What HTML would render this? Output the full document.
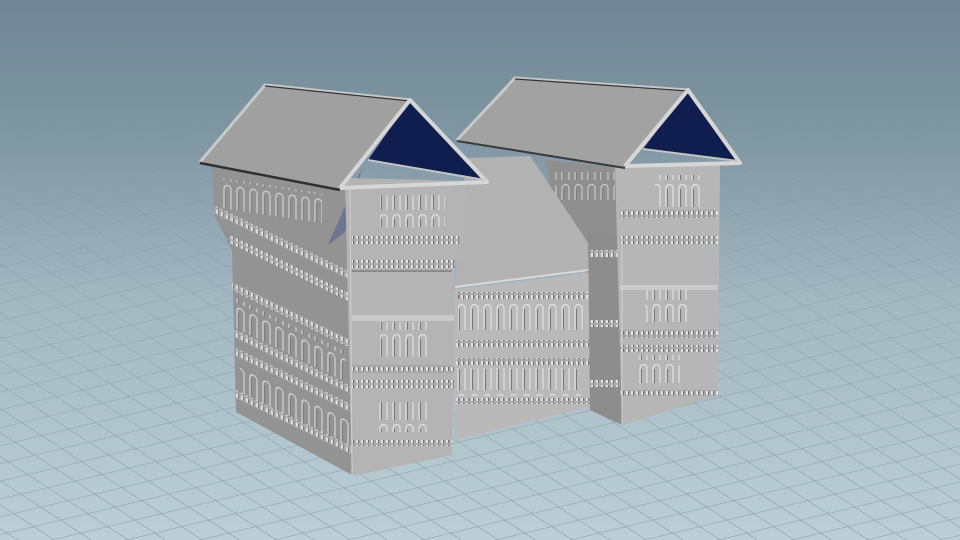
<!DOCTYPE html>
<html><head><meta charset="utf-8"><style>
html,body{margin:0;padding:0;width:960px;height:540px;overflow:hidden;background:#738997}
svg{display:block}
</style></head><body>
<svg width="960" height="540" viewBox="0 0 960 540" xmlns="http://www.w3.org/2000/svg">
<defs>
<linearGradient id="bg" x1="0" y1="0" x2="0" y2="1">
<stop offset="0" stop-color="#708694"/>
<stop offset="0.25" stop-color="#7f96a3"/>
<stop offset="0.55" stop-color="#a3b7c1"/>
<stop offset="1" stop-color="#bccfd6"/>
</linearGradient>
<linearGradient id="fade" x1="0" y1="0" x2="0" y2="1">
<stop offset="0" stop-color="#fff" stop-opacity="0"/>
<stop offset="0.2" stop-color="#fff" stop-opacity="0"/>
<stop offset="0.4" stop-color="#fff" stop-opacity="0.5"/>
<stop offset="1" stop-color="#fff" stop-opacity="1"/>
</linearGradient>
<mask id="gm"><rect width="960" height="540" fill="url(#fade)"/></mask>
<pattern id="grid" width="100" height="100" patternUnits="userSpaceOnUse" patternTransform="matrix(0.27,-0.065,0.2,0.13,0,0)">
<path d="M0 0H100M0 0V100" stroke="#7d929d" stroke-width="6" fill="none"/>
</pattern>
<pattern id="win" width="13" height="30" patternUnits="userSpaceOnUse">
<path d="M3 30V8a3.5 3.5 0 0 1 7 0V30" fill="none" stroke="#e0e0e0" stroke-width="1.2"/>
<path d="M4.5 30V9" stroke="#777" stroke-width="1"/>
</pattern>
<pattern id="dent" width="5" height="6" patternUnits="userSpaceOnUse">
<rect width="5" height="6" fill="#a8a8a8"/><rect x="1" y="1" width="2" height="4" fill="#e2e2e2"/><rect x="3" y="1" width="1" height="4" fill="#6f6f6f"/>
</pattern>
</defs>
<rect width="960" height="540" fill="url(#bg)"/>
<rect width="960" height="540" fill="url(#grid)" mask="url(#gm)" opacity="0.8"/>

<polygon points="545,160 625,168 625,265 590,278 560,235" fill="#8f8f8f"/>
<rect x="555" y="172" width="60" height="28" fill="url(#win)" opacity="0.7"/>

<polygon points="212,165 350,186 352,475 236,412 232,250 214,215" fill="#939393"/>
<rect x="222" y="178" width="100" height="30" fill="url(#win)" opacity="0.8" transform="skewY(8.5) translate(0,-33)"/>
<g transform="skewY(26) translate(0,-113)">
<rect x="214" y="214" width="136" height="8" fill="url(#dent)"/>
<rect x="228" y="236" width="122" height="8" fill="url(#dent)"/>
<rect x="232" y="282" width="118" height="8" fill="url(#dent)"/>
<rect x="236" y="296" width="110" height="30" fill="url(#win)" opacity="0.85"/>
<rect x="234" y="328" width="116" height="8" fill="url(#dent)"/>
<rect x="236" y="346" width="116" height="8" fill="url(#dent)"/>
<rect x="240" y="360" width="110" height="28" fill="url(#win)" opacity="0.85"/>
<rect x="236" y="388" width="116" height="8" fill="url(#dent)"/>
</g>
<polygon points="328,245 362,168 345,232" fill="#6e7590"/>

<polygon points="452,290 592,272 596,405 455,440" fill="#b9b9b9"/>
<rect x="458" y="292" width="130" height="7" fill="url(#dent)"/>
<rect x="458" y="300" width="125" height="32" fill="url(#win)"/>
<rect x="456" y="340" width="134" height="7" fill="url(#dent)"/>
<rect x="456" y="358" width="134" height="7" fill="url(#dent)"/>
<rect x="456" y="368" width="125" height="28" fill="url(#win)"/>
<rect x="456" y="398" width="134" height="6" fill="url(#dent)"/>
<polygon points="466,158 530,156 605,268 455,287" fill="#b2b2b2"/>
<line x1="455" y1="287" x2="605" y2="268" stroke="#d8d8d8" stroke-width="2"/>

<polygon points="345,178 466,181 462,240 455,268 452,455 352,476" fill="#b4b4b4"/>
<rect x="380" y="195" width="65" height="32" fill="url(#win)"/>
<rect x="352" y="236" width="108" height="8" fill="url(#dent)"/>
<rect x="352" y="260" width="104" height="8" fill="url(#dent)"/>
<rect x="352" y="270" width="100" height="2" fill="#8a8a8a"/>
<rect x="352" y="315" width="102" height="6" fill="#c9c9c9"/>
<rect x="380" y="322" width="50" height="35" fill="url(#win)"/>
<rect x="352" y="365" width="102" height="8" fill="url(#dent)"/>
<rect x="352" y="380" width="102" height="8" fill="url(#dent)"/>
<rect x="378" y="402" width="50" height="30" fill="url(#win)"/>
<rect x="352" y="440" width="100" height="6" fill="url(#dent)"/>
<line x1="350" y1="186" x2="352" y2="476" stroke="#d0d0d0" stroke-width="1"/>

<polygon points="588,228 622,238 622,425 590,410" fill="#8d8d8d"/>
<rect x="590" y="250" width="30" height="7" fill="url(#dent)"/>
<rect x="590" y="320" width="30" height="7" fill="url(#dent)"/>
<rect x="590" y="380" width="30" height="7" fill="url(#dent)"/>
<polygon points="615,165 720,165 718,395 622,425" fill="#b6b6b6"/>
<rect x="655" y="175" width="45" height="32" fill="url(#win)"/>
<rect x="620" y="210" width="98" height="8" fill="url(#dent)"/>
<rect x="620" y="236" width="98" height="8" fill="url(#dent)"/>
<rect x="620" y="285" width="98" height="5" fill="#cacaca"/>
<rect x="645" y="290" width="45" height="32" fill="url(#win)"/>
<rect x="620" y="330" width="98" height="8" fill="url(#dent)"/>
<rect x="620" y="345" width="98" height="7" fill="url(#dent)"/>
<rect x="635" y="355" width="45" height="28" fill="url(#win)"/>
<rect x="620" y="390" width="98" height="6" fill="url(#dent)"/>
<line x1="622" y1="238" x2="622" y2="425" stroke="#d0d0d0" stroke-width="1"/>

<polygon points="265,85 410,100 340,190 200,162" fill="#a0a0a0"/>
<polygon points="410,100 485,181 368,160" fill="#0f1e4e"/>
<polyline points="200,162 265,85 410,100" fill="none" stroke="#c8c8c8" stroke-width="3"/>
<line x1="265" y1="86" x2="410" y2="101" stroke="#333" stroke-width="1.2"/>
<line x1="200" y1="163" x2="340" y2="190" stroke="#303030" stroke-width="2.5"/>
<polyline points="340,188 410,100 487,182 340,188" fill="none" stroke="#d6d6d6" stroke-width="4" stroke-linejoin="round"/>
<line x1="368" y1="160" x2="485" y2="180" stroke="#c4c4c4" stroke-width="2"/>

<polygon points="515,78 688,90 625,168 457,140" fill="#a2a2a2"/>
<polygon points="688,90 738,162 643,149" fill="#0f1e4e"/>
<polyline points="457,140 515,78 688,90" fill="none" stroke="#c8c8c8" stroke-width="3"/>
<line x1="515" y1="79" x2="688" y2="91" stroke="#333" stroke-width="1.2"/>
<line x1="457" y1="141" x2="625" y2="168" stroke="#3a3a3a" stroke-width="2"/>
<polyline points="625,166 688,90 740,163 625,166" fill="none" stroke="#d6d6d6" stroke-width="4" stroke-linejoin="round"/>
<line x1="643" y1="149" x2="738" y2="161" stroke="#c4c4c4" stroke-width="2"/>
</svg>
</body></html>
